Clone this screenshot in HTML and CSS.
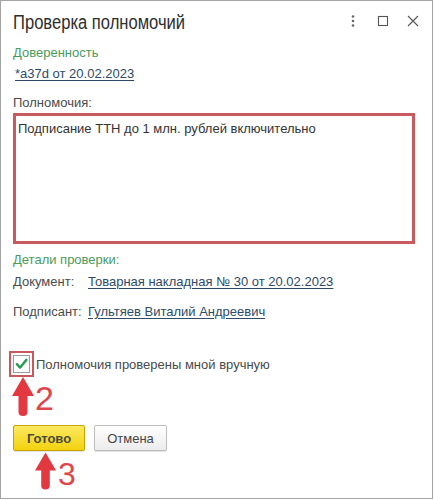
FILE: index.html
```html
<!DOCTYPE html>
<html lang="ru">
<head>
<meta charset="utf-8">
<title>Проверка полномочий</title>
<link rel="stylesheet" href="styles.css">
</head>
<body>
<div class="window">
  <div class="titlebar">
    <div class="title">Проверка полномочий</div>
    <div class="tools">
      <svg class="tool" viewBox="0 0 20 20" width="20" height="20"><circle cx="10" cy="5.5" r="1.3" fill="#666"/><circle cx="10" cy="10" r="1.3" fill="#666"/><circle cx="10" cy="14.5" r="1.3" fill="#666"/></svg>
      <svg class="tool" viewBox="0 0 20 20" width="20" height="20"><rect x="5.5" y="5.5" width="9" height="9" fill="none" stroke="#555" stroke-width="1.1"/></svg>
      <svg class="tool" viewBox="0 0 20 20" width="20" height="20"><path d="M5 5 L15 15 M15 5 L5 15" stroke="#555" stroke-width="1.1" fill="none"/></svg>
    </div>
  </div>
  <div class="content">
    <div class="group-title first">Доверенность</div>
    <a class="link proxy" href="#">*a37d от 20.02.2023</a>
    <div class="label perm-label">Полномочия:</div>
    <div class="perm-box">Подписание ТТН до 1 млн. рублей включительно</div>
    <div class="group-title details">Детали проверки:</div>
    <div class="details-grid">
      <div class="label">Документ:</div>
      <a class="link" href="#">Товарная накладная № 30 от 20.02.2023</a>
      <div class="label">Подписант:</div>
      <a class="link" href="#">Гультяев Виталий Андреевич</a>
    </div>
    <div class="check-row">
      <span class="checkbox">
        <svg viewBox="0 0 16 16" width="16" height="16"><path d="M3 8.2 L6.6 11.8 L13.2 3.6" stroke="#2a9a55" stroke-width="2.6" fill="none" stroke-linecap="round" stroke-linejoin="round"/></svg>
      </span>
      <span class="check-label">Полномочия проверены мной вручную</span>
    </div>
    <div class="buttons">
      <button class="btn btn-primary">Готово</button>
      <button class="btn">Отмена</button>
    </div>
  </div>
  <svg class="arrow arrow-2" viewBox="0 0 22 39" width="22" height="39"><path d="M11 0 L22 19 L15.5 19 L15.5 35 Q15.5 39 11 39 Q6.5 39 6.5 35 L6.5 19 L0 19 Z" fill="#e2383f"/></svg>
  <span class="num num-2">2</span>
  <svg class="arrow arrow-3" viewBox="0 0 22 39" width="21" height="38"><path d="M11 0 L22 19 L15.5 19 L15.5 35 Q15.5 39 11 39 Q6.5 39 6.5 35 L6.5 19 L0 19 Z" fill="#e2383f"/></svg>
  <span class="num num-3">3</span>
</div>
</body>
</html>
```
FILE: styles.css
```css
html, body {
  margin: 0;
  padding: 0;
  background: #ffffff;
}

.window {
  box-sizing: border-box;
  position: relative;
  width: 433px;
  height: 499px;
  border: 1px solid #a4a4a4;
  background: #fff;
  font-family: "Liberation Sans", Arial, sans-serif;
  font-size: 13px;
  line-height: 15px;
  color: #4a4a4a;
}

.titlebar {
  display: flex;
  align-items: center;
  padding: 10px 9px 0 12px;
  height: 23px;
}

.title {
  font-family: "Liberation Sans", Arial, sans-serif;
  font-size: 19.5px;
  line-height: 23px;
  color: #2e2e2e;
  transform: scaleX(0.85);
  transform-origin: left center;
}

.tools {
  margin-left: auto;
  display: flex;
  gap: 10px;
  margin-top: -3px;
}

.tool {
  display: block;
}

.content {
  padding: 0 0 0 12px;
  display: flex;
  flex-direction: column;
  align-items: flex-start;
}

.group-title {
  color: #4a9a5c;
}

.group-title.first {
  margin-top: 11px;
}

.link {
  color: #2f4a66;
  text-decoration: underline;
  text-underline-offset: 2px;
}

.proxy {
  margin-top: 6px;
  padding-left: 2px;
}

.perm-label {
  margin-top: 14px;
}

.perm-box {
  box-sizing: border-box;
  margin-top: 3px;
  width: 402px;
  height: 131px;
  border: 3px solid #c95a5e;
  padding: 5px 2px;
  color: #333;
}

.group-title.details {
  margin-top: 8px;
}

.details-grid {
  display: grid;
  grid-template-columns: 75px auto;
  row-gap: 15px;
  margin-top: 7px;
}

.check-row {
  display: flex;
  align-items: center;
  margin-top: 36px;
}

.checkbox {
  box-sizing: border-box;
  width: 17px;
  height: 18px;
  border: 1px solid #9a9a9a;
  background: #fff;
  display: flex;
  align-items: center;
  justify-content: center;
  outline: 2px solid #c9575c;
  outline-offset: 2px;
}

.checkbox svg {
  display: block;
}

.check-label {
  margin-left: 6px;
}

.buttons {
  display: flex;
  gap: 9px;
  margin-top: 52px;
}

.btn {
  box-sizing: border-box;
  height: 26px;
  width: 73px;
  border: 1px solid #bdbdbd;
  border-radius: 2px;
  background: linear-gradient(#ffffff, #ececec);
  font-family: "Liberation Sans", Arial, sans-serif;
  font-size: 13px;
  color: #444;
  padding: 0;
  box-shadow: 0 1px 1px rgba(0,0,0,0.12);
}

.btn-primary {
  width: 72px;
  border-color: #c7a400;
  background: linear-gradient(#fbe960, #f3d20f);
  font-weight: bold;
  color: #4a4a3a;
}

.arrow {
  position: absolute;
  display: block;
}

.arrow-2 {
  left: 11px;
  top: 376px;
}

.arrow-3 {
  left: 34px;
  top: 451px;
}

.num {
  position: absolute;
  color: #e0454b;
  font-family: "Liberation Sans", Arial, sans-serif;
  line-height: 1;
}

.num-2 {
  left: 34px;
  top: 380px;
  font-size: 34px;
}

.num-3 {
  left: 57px;
  top: 457px;
  font-size: 32px;
}
```
